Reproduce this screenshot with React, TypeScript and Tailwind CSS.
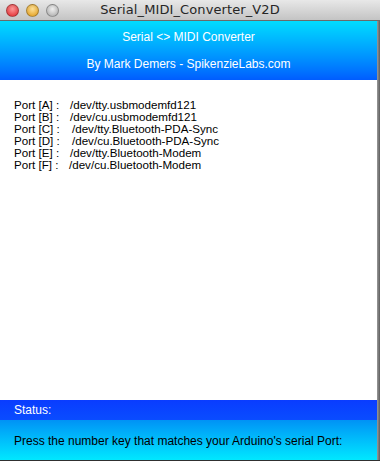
import React from "react";

const ports = [
    { id: "A", path: "/dev/tty.usbmodemfd121", pad: "pl-[56px]" },
    { id: "B", path: "/dev/cu.usbmodemfd121", pad: "pl-[56px]" },
    { id: "C", path: "/dev/tty.Bluetooth-PDA-Sync", pad: "pl-[58px]" },
    { id: "D", path: "/dev/cu.Bluetooth-PDA-Sync", pad: "pl-[58px]" },
    { id: "E", path: "/dev/tty.Bluetooth-Modem", pad: "pl-[56px]" },
    { id: "F", path: "/dev/cu.Bluetooth-Modem", pad: "pl-[55px]" },
];

const Light = ({ color }: { color: string }) => (
    <span className={`block w-[13px] h-[13px] rounded-full border border-black/30 shadow-inner ${color}`} />
);

export default function App() {
    return (
        <div className="w-[380px] h-[461px] flex flex-col bg-white overflow-hidden font-['Liberation_Sans',Arial,sans-serif]">
            {/* title bar */}
            <div className="h-[21px] shrink-0 flex items-center relative bg-gradient-to-b from-[#e8e8e8] to-[#c4c4c4] border-b border-[#6a6a6a]">
                <div className="flex gap-[7px] pl-[6px]">
                    <Light color="bg-[radial-gradient(circle_at_50%_35%,#ff9a9a,#e0262b)]" />
                    <Light color="bg-[radial-gradient(circle_at_50%_35%,#ffe39a,#e09a16)]" />
                    <Light color="bg-[radial-gradient(circle_at_50%_35%,#f2f2f2,#a8a8a8)]" />
                </div>
                <div className="absolute inset-0 flex items-center justify-center text-[13px] text-[#262626] font-['DejaVu_Sans',sans-serif] tracking-[0.1px]">
                    Serial_MIDI_Converter_V2D
                </div>
            </div>

            <div className="flex-1 flex">
                <div className="flex-1 flex flex-col">
                    {/* header */}
                    <div className="h-[59px] shrink-0 bg-gradient-to-b from-[#00dcff] to-[#005cff] text-white text-[12px] flex flex-col items-center pt-[9px] gap-[13px]">
                        <div className="leading-[14px]">Serial &lt;&gt; MIDI Converter</div>
                        <div className="leading-[14px]">By Mark Demers - SpikenzieLabs.com</div>
                    </div>

                    {/* port list */}
                    <div className="flex-1 pt-[19px] pl-[14px] text-[11.6px] leading-[12px] text-black">
                        {ports.map((p) => (
                            <div key={p.id} className="flex h-[12px]">
                                <span className="w-0 whitespace-nowrap">Port [{p.id}] :</span>
                                <span className={`whitespace-nowrap ${p.pad}`}>{p.path}</span>
                            </div>
                        ))}
                    </div>

                    {/* status */}
                    <div className="h-[20px] shrink-0 bg-gradient-to-b from-[#0a3cff] to-[#0a4cff] text-white text-[12px] flex items-center pl-[14px]">
                        Status:
                    </div>
                    <div className="h-[40px] shrink-0 bg-gradient-to-b from-[#0092f5] to-[#00e8ff] text-black text-[12px] flex items-center pl-[14px] pt-[1px]">
                        Press the number key that matches your Arduino's serial Port:
                    </div>
                </div>
                <div className="w-[3px] shrink-0 bg-gradient-to-r from-[#9a9a9a] to-[#5e5e5e]" />
            </div>
            <div className="h-[1px] shrink-0 bg-[#303030]" />
        </div>
    );
}
